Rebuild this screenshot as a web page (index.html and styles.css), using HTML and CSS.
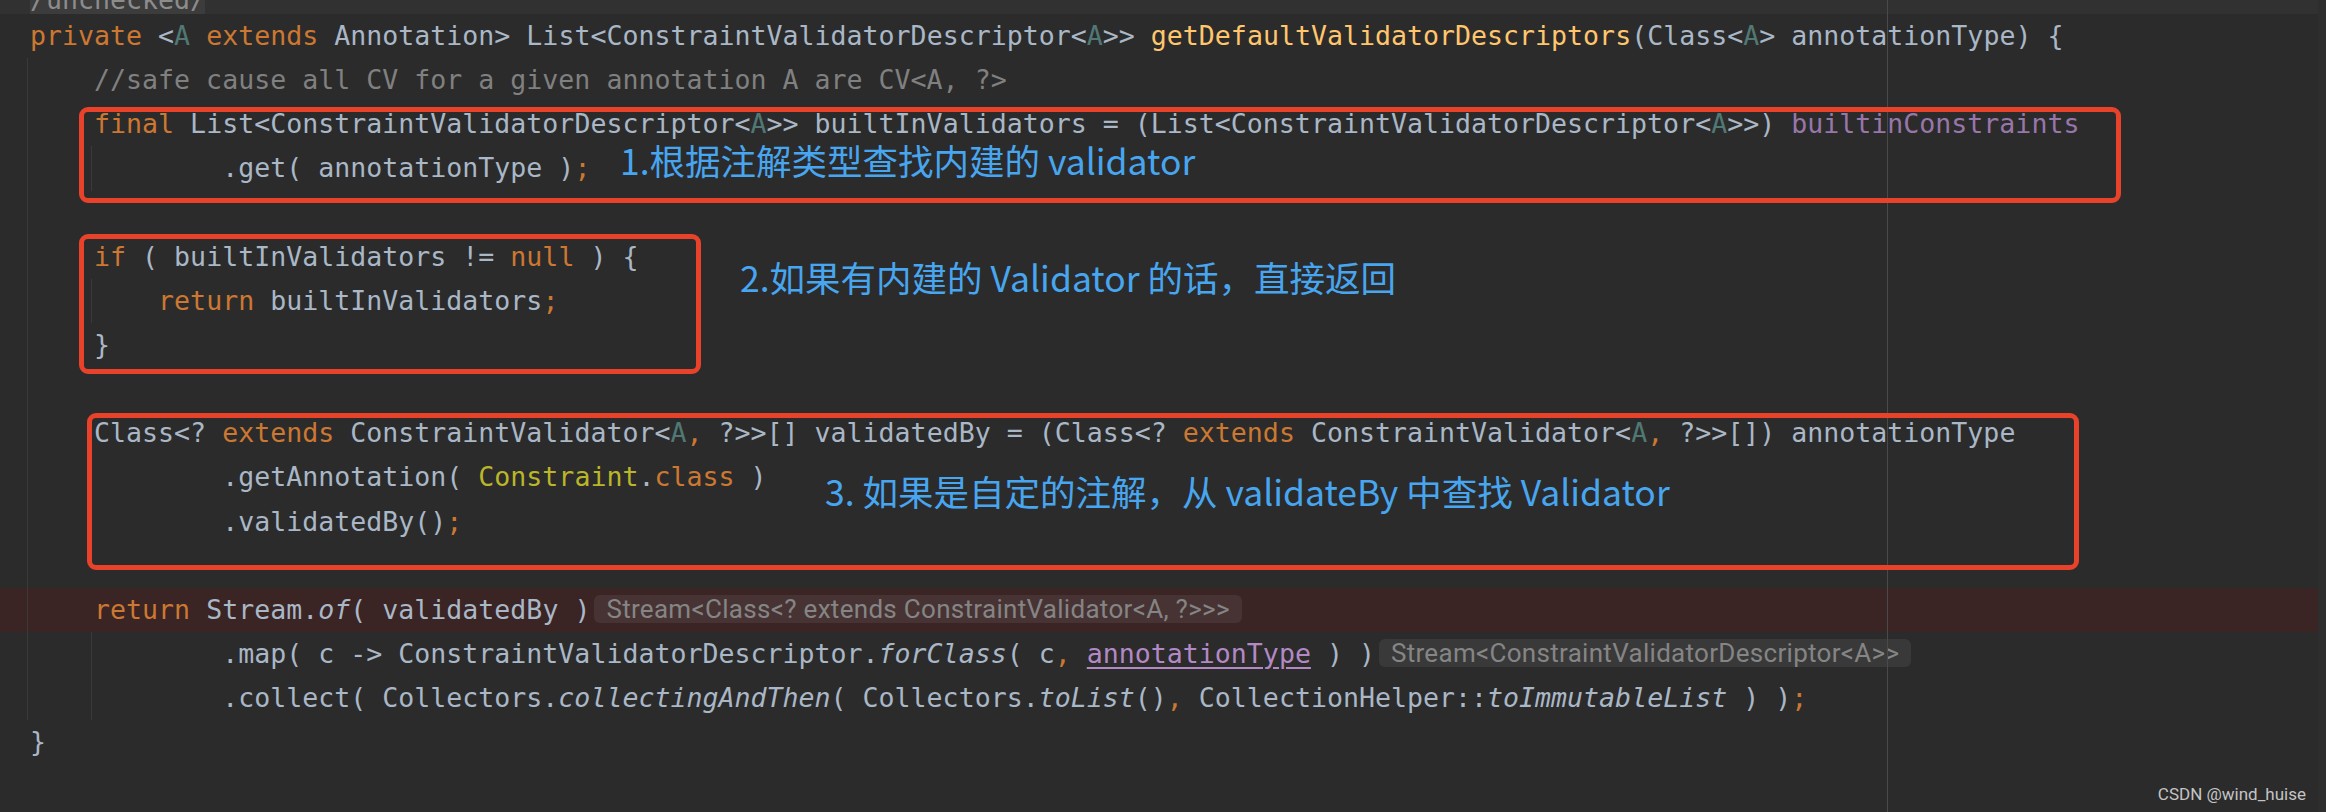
FILE: index.html
```html
<!DOCTYPE html>
<html lang="zh">
<head>
<meta charset="utf-8">
<title>getDefaultValidatorDescriptors</title>
<link rel="stylesheet" href="styles.css">
</head>
<body>
<div class="editor">
  <div class="main">
    <div class="sticky"><div class="fold">/unchecked/</div></div>
    <div class="code">
      <div class="ln"><span class="kw">private</span> &lt;<span class="tp">A</span> <span class="kw">extends</span> Annotation&gt; List&lt;ConstraintValidatorDescriptor&lt;<span class="tp">A</span>&gt;&gt; <span class="fn">getDefaultValidatorDescriptors</span>(Class&lt;<span class="tp">A</span>&gt; annotationType) {</div>
      <div class="ln g1">    <span class="cm">//safe cause all CV for a given annotation A are CV&lt;A, ?&gt;</span></div>
      <div class="ln g1">    <span class="kw">final</span> List&lt;ConstraintValidatorDescriptor&lt;<span class="tp">A</span>&gt;&gt; builtInValidators = (List&lt;ConstraintValidatorDescriptor&lt;<span class="tp">A</span>&gt;&gt;) <span class="fd">builtinConstraints</span></div>
      <div class="ln g1 g2">            .get( annotationType )<span class="kw">;</span></div>
      <div class="ln g1"></div>
      <div class="ln g1">    <span class="kw">if</span> ( builtInValidators != <span class="kw">null</span> ) {</div>
      <div class="ln g1 g2">        <span class="kw">return</span> builtInValidators<span class="kw">;</span></div>
      <div class="ln g1">    }</div>
      <div class="ln g1"></div>
      <div class="ln g1">    Class&lt;? <span class="kw">extends</span> ConstraintValidator&lt;<span class="tp">A</span><span class="kw">,</span> ?&gt;&gt;[] validatedBy = (Class&lt;? <span class="kw">extends</span> ConstraintValidator&lt;<span class="tp">A</span><span class="kw">,</span> ?&gt;&gt;[]) annotationType</div>
      <div class="ln g1">            .getAnnotation( <span class="an">Constraint</span>.<span class="kw">class</span> )</div>
      <div class="ln g1">            .validatedBy()<span class="kw">;</span></div>
      <div class="ln g1"></div>
      <div class="ln g1 bp">    <span class="kw">return</span> Stream.<i>of</i>( validatedBy )<span class="hint">Stream&lt;Class&lt;? extends ConstraintValidator&lt;A, ?&gt;&gt;&gt;</span></div>
      <div class="ln g1 g2">            .map( c -&gt; ConstraintValidatorDescriptor.<i>forClass</i>( c<span class="kw">,</span> <span class="pu">annotationType</span> ) )<span class="hint">Stream&lt;ConstraintValidatorDescriptor&lt;A&gt;&gt;</span></div>
      <div class="ln g1 g2">            .collect( Collectors.<i>collectingAndThen</i>( Collectors.<i>toList</i>()<span class="kw">,</span> CollectionHelper::<i>toImmutableList</i> ) )<span class="kw">;</span></div>
      <div class="ln">}</div>
    </div>

    <div class="margin-line"></div>

    <div class="box box1"></div>
    <div class="box box2"></div>
    <div class="box box3"></div>

    <div class="note note1">1.根据注解类型查找内建的 validator</div>
    <div class="note note2">2.如果有内建的 Validator 的话，直接返回</div>
    <div class="note note3">3. 如果是自定的注解，从 validateBy 中查找 Validator</div>

    <div class="watermark">CSDN @wind_huise</div>
  </div>
  <div class="scroll"></div>
</div>
</body>
</html>
```

FILE: styles.css
```css
html, body {
  margin: 0;
  padding: 0;
  background: #2b2b2b;
}

.editor {
  display: flex;
  width: 2326px;
  height: 812px;
  overflow: hidden;
  background: #2b2b2b;
}

.main {
  position: relative;
  flex: 1;
  height: 100%;
  overflow: hidden;
}

.scroll {
  width: 8px;
  height: 100%;
  background: #2e2e2e;
}

.sticky {
  height: 14px;
  overflow: hidden;
  background: #313131;
  padding-left: 30px;
  font-family: "DejaVu Sans Mono", "Liberation Mono", monospace;
  font-size: 26.6px;
}

.fold {
  width: 175px;
  height: 14px;
  line-height: 0;
  background: #3c3c3c;
  color: #8c8c8c;
  white-space: pre;
}

.code {
  font-family: "DejaVu Sans Mono", "Liberation Mono", monospace;
  font-size: 26.6px;
  color: #a9b7c6;
}

.ln {
  height: 44.15px;
  line-height: 44.15px;
  padding-left: 30px;
  white-space: pre;
}

.g1 {
  background-image: linear-gradient(#3a3a3a, #3a3a3a);
  background-size: 1px 100%;
  background-position: 27px 0;
  background-repeat: no-repeat;
}

.g1.g2 {
  background-image: linear-gradient(#3a3a3a, #3a3a3a), linear-gradient(#3a3a3a, #3a3a3a);
  background-size: 1px 100%, 1px 100%;
  background-position: 27px 0, 91px 0;
  background-repeat: no-repeat, no-repeat;
}

.bp {
  background-color: #3a2424;
}

.kw { color: #cc7832; }
.tp { color: #507874; }
.fn { color: #ffc66d; }
.cm { color: #808080; }
.fd { color: #9876aa; }
.an { color: #bbb529; }
.pu {
  color: #b389c5;
  text-decoration: underline;
  text-underline-offset: 4px;
}

i {
  font-style: italic;
}

.hint {
  display: inline-block;
  margin-left: 4px;
  padding: 0 12px;
  height: 28px;
  line-height: 28px;
  border-radius: 6px;
  background: rgba(255, 255, 255, 0.07);
  color: #858585;
  font-family: Roboto, "Liberation Sans", sans-serif;
  font-size: 26px;
  letter-spacing: 0.3px;
  vertical-align: 1px;
}

.margin-line {
  position: absolute;
  left: 1887px;
  top: 0;
  width: 1px;
  height: 100%;
  background: #4a4a4a;
}

.box {
  position: absolute;
  box-sizing: border-box;
  border: 5px solid #e8422b;
  border-radius: 9px;
}

.box1 { left: 79px; top: 107px; width: 2042px; height: 96px; }
.box2 { left: 79px; top: 234px; width: 622px; height: 140px; }
.box3 { left: 87px; top: 413px; width: 1992px; height: 157px; }

.note {
  position: absolute;
  font-family: "Noto Sans CJK SC", "Noto Sans", sans-serif;
  font-size: 35.5px;
  line-height: 36px;
  color: #47a6ef;
  white-space: pre;
}

.note1 { left: 620px; top: 142px; }
.note2 { left: 740px; top: 259px; }
.note3 { left: 825px; top: 473px; }

.watermark {
  position: absolute;
  right: 12px;
  bottom: 8px;
  font-family: Roboto, "Liberation Sans", sans-serif;
  font-size: 17px;
  color: #c4c4c4;
}
```
